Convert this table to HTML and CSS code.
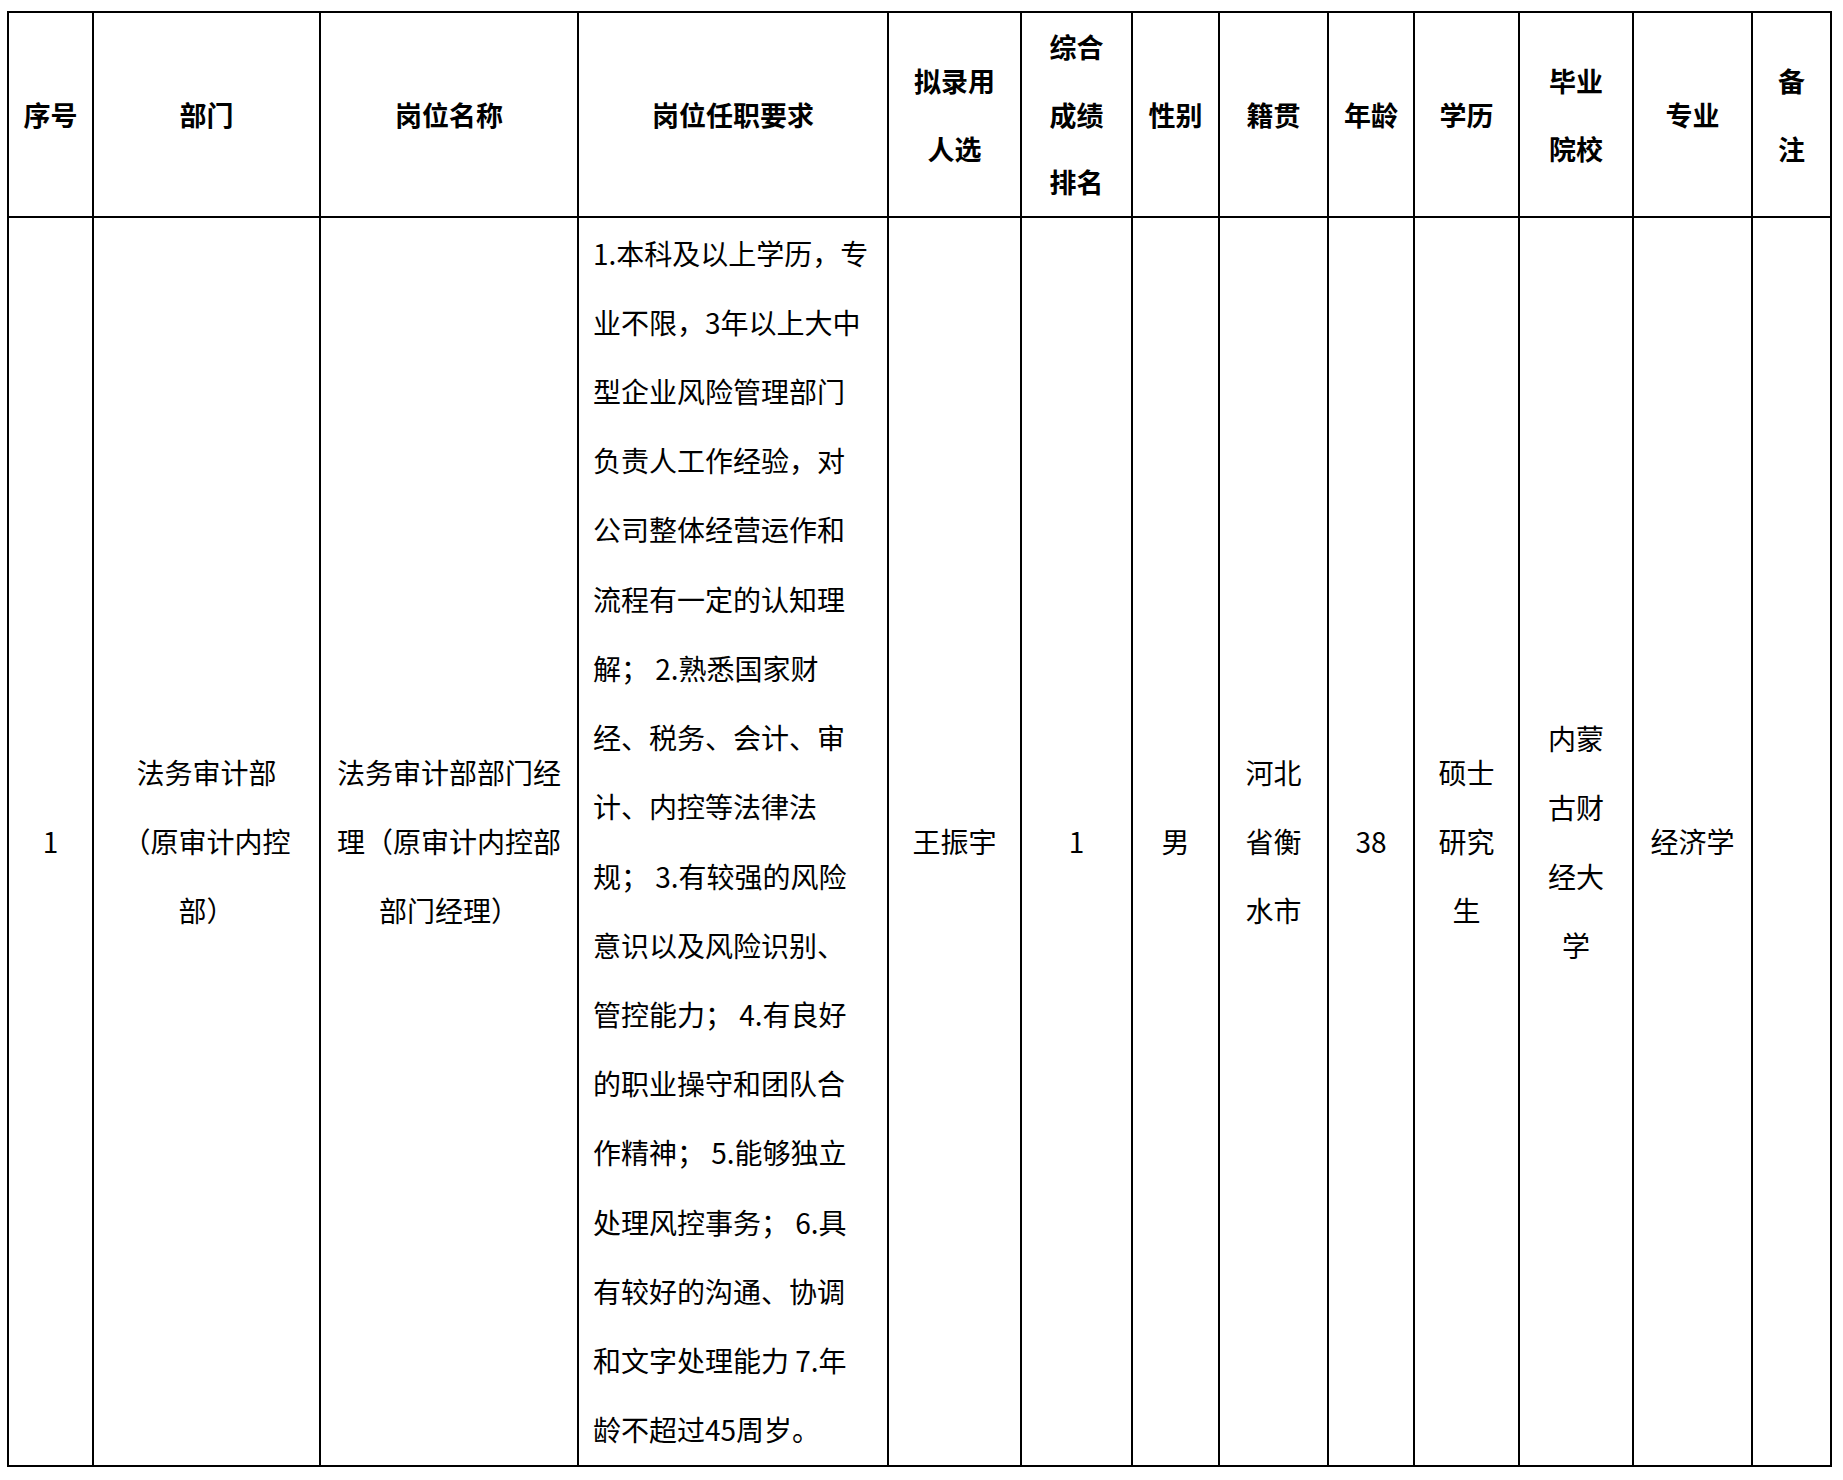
FILE: index.html
```html
<!DOCTYPE html>
<html lang="zh-CN">
<head>
<meta charset="utf-8">
<title>拟录用人选公示</title>
<link rel="stylesheet" href="styles.css">
</head>
<body>
<div class="page">
<table class="roster">
  <colgroup>
    <col class="c-no">
    <col class="c-dept">
    <col class="c-post">
    <col class="c-req">
    <col class="c-name">
    <col class="c-rank">
    <col class="c-sex">
    <col class="c-home">
    <col class="c-age">
    <col class="c-edu">
    <col class="c-school">
    <col class="c-major">
    <col class="c-note">
  </colgroup>
  <thead>
    <tr>
      <th>序号</th>
      <th>部门</th>
      <th>岗位名称</th>
      <th>岗位任职要求</th>
      <th>拟录用<br>人选</th>
      <th>综合<br>成绩<br>排名</th>
      <th>性别</th>
      <th>籍贯</th>
      <th>年龄</th>
      <th>学历</th>
      <th>毕业<br>院校</th>
      <th>专业</th>
      <th>备<br>注</th>
    </tr>
  </thead>
  <tbody>
    <tr>
      <td>1</td>
      <td>法务审计部<br>（原审计内控<br>部）</td>
      <td>法务审计部部门经<br>理（原审计内控部<br>部门经理）</td>
      <td class="req">1.本科及以上学历，专<br>业不限，3年以上大中<br>型企业风险管理部门<br>负责人工作经验，对<br>公司整体经营运作和<br>流程有一定的认知理<br>解； 2.熟悉国家财<br>经、税务、会计、审<br>计、内控等法律法<br>规； 3.有较强的风险<br>意识以及风险识别、<br>管控能力； 4.有良好<br>的职业操守和团队合<br>作精神； 5.能够独立<br>处理风控事务； 6.具<br>有较好的沟通、协调<br>和文字处理能力 7.年<br>龄不超过45周岁。</td>
      <td>王振宇</td>
      <td>1</td>
      <td>男</td>
      <td>河北<br>省衡<br>水市</td>
      <td>38</td>
      <td>硕士<br>研究<br>生</td>
      <td>内蒙<br>古财<br>经大<br>学</td>
      <td>经济学</td>
      <td></td>
    </tr>
  </tbody>
</table>
</div>
</body>
</html>
```
FILE: styles.css
```css
html, body {
  margin: 0;
  padding: 0;
  background: #ffffff;
}

.page {
  padding: 11px 0 0 7px;
}

.roster {
  border-collapse: collapse;
  table-layout: fixed;
  width: 1825px;
  border: 2px solid #000;
  font-family: "Noto Sans CJK SC", "Microsoft YaHei", sans-serif;
  color: #000;
}

.roster th,
.roster td {
  border: 2px solid #000;
  padding: 0;
  text-align: center;
  vertical-align: middle;
  white-space: nowrap;
}

.roster th {
  font-size: 27px;
  font-weight: 700;
  line-height: 67.6px;
  height: 203px;
}

.roster td {
  font-size: 28px;
  font-weight: 400;
  line-height: 69px;
  height: 1247px;
}

.roster td.req {
  text-align: left;
  padding-left: 14px;
  line-height: 69.2px;
}

.c-no { width: 85px; }
.c-dept { width: 227px; }
.c-post { width: 258px; }
.c-req { width: 310px; }
.c-name { width: 133px; }
.c-rank { width: 111px; }
.c-sex { width: 87px; }
.c-home { width: 109px; }
.c-age { width: 86px; }
.c-edu { width: 105px; }
.c-school { width: 114px; }
.c-major { width: 119px; }
.c-note { width: 79px; }
```
